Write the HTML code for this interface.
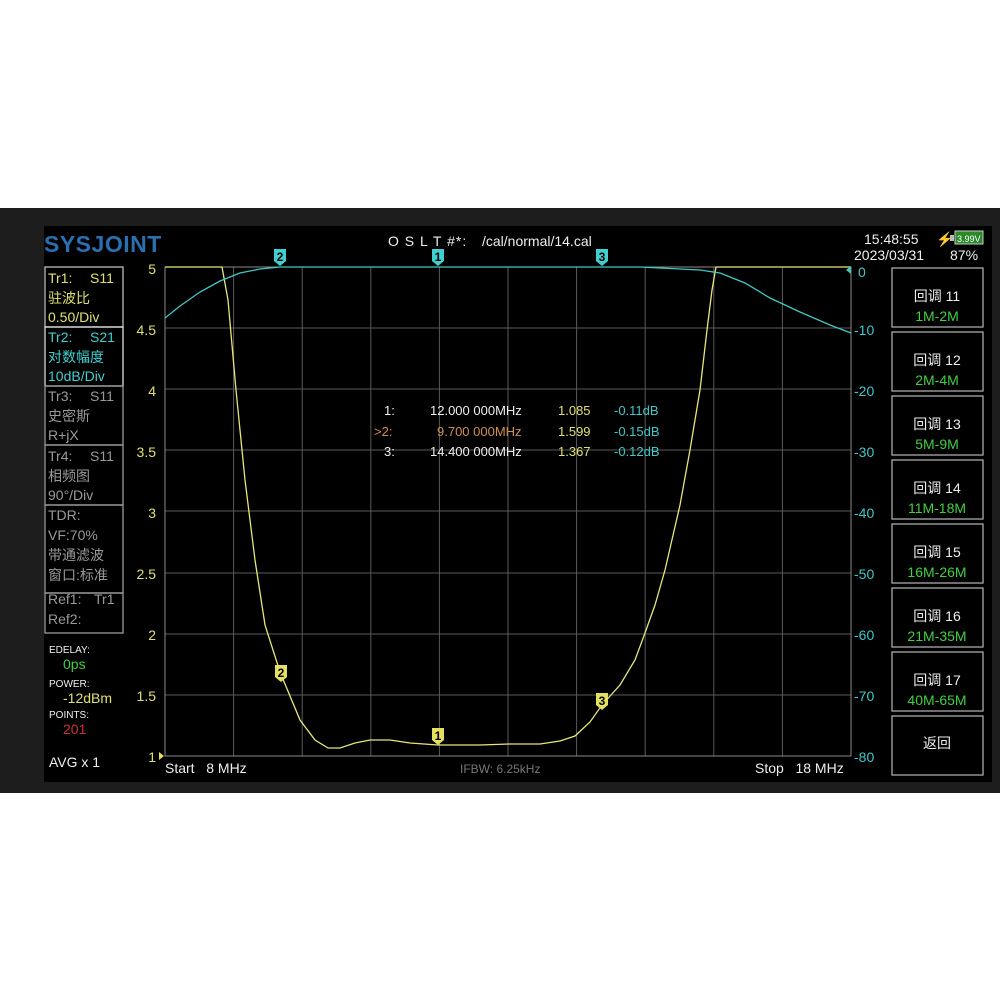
<!DOCTYPE html>
<html><head><meta charset="utf-8"><style>
html,body{margin:0;padding:0;background:#fff;width:1000px;height:1000px;overflow:hidden}
svg{display:block}
text{font-family:"Liberation Sans","Noto Sans CJK SC",sans-serif;white-space:pre}
</style></head><body>
<svg width="1000" height="1000" viewBox="0 0 1000 1000" xml:space="preserve">
<rect x="0" y="0" width="1000" height="1000" fill="#fff"/>
<rect x="0" y="208" width="1000" height="585" fill="#1d1d1d"/>
<rect x="44" y="226" width="948" height="556" fill="#000"/>
<text x="44" y="252" font-size="23" font-weight="bold" fill="#2a6fb0" letter-spacing="0.5">SYSJOINT</text>
<text x="388" y="246" font-size="14" fill="#eee" letter-spacing="1">O S L T #*:</text>
<text x="482" y="246" font-size="14" fill="#eee">/cal/normal/14.cal</text>
<text x="864" y="244" font-size="14" fill="#eee">15:48:55</text>
<text x="936" y="244" font-size="14" fill="#f0c020">⚡</text>
<rect x="950" y="235" width="4" height="6" fill="#bbb"/>
<rect x="955" y="231" width="28" height="13" fill="#2a8a2a" stroke="#ccc"/>
<text x="957" y="242" font-size="9" fill="#fff">3.99V</text>
<text x="854" y="260" font-size="14" fill="#eee">2023/03/31</text>
<text x="950" y="260" font-size="14" fill="#eee">87%</text>
<g stroke="#5a5a5a" stroke-width="1">
<line x1="233.6" y1="267" x2="233.6" y2="756"/><line x1="302.2" y1="267" x2="302.2" y2="756"/><line x1="370.8" y1="267" x2="370.8" y2="756"/><line x1="439.4" y1="267" x2="439.4" y2="756"/><line x1="508" y1="267" x2="508" y2="756"/><line x1="576.6" y1="267" x2="576.6" y2="756"/><line x1="645.2" y1="267" x2="645.2" y2="756"/><line x1="713.8" y1="267" x2="713.8" y2="756"/><line x1="782.4" y1="267" x2="782.4" y2="756"/>
<line x1="165" y1="328" x2="851" y2="328"/><line x1="165" y1="389" x2="851" y2="389"/><line x1="165" y1="450" x2="851" y2="450"/><line x1="165" y1="511" x2="851" y2="511"/><line x1="165" y1="573" x2="851" y2="573"/><line x1="165" y1="634" x2="851" y2="634"/><line x1="165" y1="695" x2="851" y2="695"/>
</g>
<rect x="165" y="267" width="686" height="489" fill="none" stroke="#8a8a8a"/>
<polyline fill="none" stroke="#e6e67a" stroke-width="1.3" points="165,267 222,267 228,300 236,390 245,480 255,560 265,625 280,672 300,720 315,740 328,748 340,748 355,743 370,740 390,740 410,743 438,745 480,745 510,744 540,744 560,741 575,736 590,722 602,705 620,685 635,660 645,633 655,605 665,570 680,505 690,450 700,390 707,330 712,290 716,267 851,267"/>
<polyline fill="none" stroke="#40c8c8" stroke-width="1.3" points="165,318 180,306 200,292 220,281 240,273 260,269 280,267 640,267 680,269 700,270 720,273 745,283 770,298 800,312 830,325 851,333"/>
<g fill="#40d0d0">
<path d="M274,249h12v12l-6,5l-6,-5z"/><path d="M432,249h12v12l-6,5l-6,-5z"/><path d="M596,249h12v12l-6,5l-6,-5z"/>
</g>
<g fill="#e6e060">
<path d="M275,665h12v12l-6,5l-6,-5z"/><path d="M432,728h12v12l-6,5l-6,-5z"/><path d="M596,693h12v12l-6,5l-6,-5z"/>
</g>
<g font-size="12" font-weight="bold" fill="#000" text-anchor="middle">
<text x="280" y="261">2</text><text x="438" y="261">1</text><text x="602" y="261">3</text>
<text x="281" y="677">2</text><text x="438" y="740">1</text><text x="602" y="705">3</text>
</g>
<path d="M851,266l-5,4l5,4z" fill="#40c8c8"/>
<path d="M159,752l5,4l-5,4z" fill="#e6e060"/>
<g font-size="14" fill="#e0e070" text-anchor="end">
<text x="156" y="274">5</text><text x="156" y="335">4.5</text><text x="156" y="396">4</text><text x="156" y="457">3.5</text><text x="156" y="518">3</text><text x="156" y="579">2.5</text><text x="156" y="640">2</text><text x="156" y="701">1.5</text><text x="156" y="762">1</text>
</g>
<g font-size="14" fill="#40c8c8">
<text x="858" y="277">0</text><text x="854" y="335">-10</text><text x="854" y="396">-20</text><text x="854" y="457">-30</text><text x="854" y="518">-40</text><text x="854" y="579">-50</text><text x="854" y="640">-60</text><text x="854" y="701">-70</text><text x="854" y="762">-80</text>
</g>
<text x="165" y="773" font-size="14" fill="#eee">Start   8 MHz</text>
<text x="460" y="773" font-size="12" fill="#777">IFBW: 6.25kHz</text>
<text x="755" y="773" font-size="14" fill="#eee">Stop   18 MHz</text>
<g font-size="13">
<text x="384" y="415" fill="#eee">1:</text><text x="430" y="415" fill="#eee">12.000 000MHz</text><text x="558" y="415" fill="#e0e070">1.085</text><text x="614" y="415" fill="#40c8c8">-0.11dB</text>
<text x="374" y="436" fill="#d09050">&gt;2:</text><text x="437" y="436" fill="#d09050">9.700 000MHz</text><text x="558" y="436" fill="#e0e070">1.599</text><text x="614" y="436" fill="#40c8c8">-0.15dB</text>
<text x="384" y="456" fill="#eee">3:</text><text x="430" y="456" fill="#eee">14.400 000MHz</text><text x="558" y="456" fill="#e0e070">1.367</text><text x="614" y="456" fill="#40c8c8">-0.12dB</text>
</g>
<g fill="none" stroke-width="1.3">
<rect x="45" y="267" width="78" height="60" stroke="#bbb"/>
<rect x="45" y="327" width="78" height="59" stroke="#ddd"/>
<rect x="45" y="386" width="78" height="59" stroke="#999"/>
<rect x="45" y="445" width="78" height="60" stroke="#999"/>
<rect x="45" y="505" width="78" height="88" stroke="#999"/>
<rect x="45" y="593" width="78" height="40" stroke="#999"/>
</g>
<g font-size="14">
<text x="48" y="283" fill="#e0e070">Tr1:</text><text x="90" y="283" fill="#e0e070">S11</text><text x="48" y="303" fill="#e0e070">驻波比</text><text x="48" y="322" fill="#e0e070">0.50/Div</text>
<text x="48" y="342" fill="#40d0d0">Tr2:</text><text x="90" y="342" fill="#40d0d0">S21</text><text x="48" y="362" fill="#40d0d0">对数幅度</text><text x="48" y="381" fill="#40d0d0">10dB/Div</text>
<text x="48" y="401" fill="#999">Tr3:</text><text x="90" y="401" fill="#999">S11</text><text x="48" y="421" fill="#999">史密斯</text><text x="48" y="440" fill="#999">R+jX</text>
<text x="48" y="461" fill="#999">Tr4:</text><text x="90" y="461" fill="#999">S11</text><text x="48" y="481" fill="#999">相频图</text><text x="48" y="500" fill="#999">90°/Div</text>
<text x="48" y="520" fill="#999">TDR:</text><text x="48" y="540" fill="#999">VF:70%</text><text x="48" y="560" fill="#999">带通滤波</text><text x="48" y="580" fill="#999">窗口:标准</text>
<text x="48" y="604" fill="#999">Ref1:</text><text x="94" y="604" fill="#999">Tr1</text><text x="48" y="624" fill="#999">Ref2:</text>
</g>
<g font-size="10" fill="#eee"><text x="49" y="653">EDELAY:</text><text x="49" y="687">POWER:</text><text x="49" y="718">POINTS:</text></g>
<text x="63" y="669" font-size="14" fill="#40d040">0ps</text>
<text x="63" y="703" font-size="14" fill="#e0e070">-12dBm</text>
<text x="63" y="734" font-size="14" fill="#d03030">201</text>
<text x="49" y="767" font-size="14" fill="#eee">AVG x 1</text>
<g fill="none" stroke="#aaa" stroke-width="1.3">
<rect x="892" y="268" width="91" height="59"/><rect x="892" y="332" width="91" height="59"/><rect x="892" y="396" width="91" height="59"/><rect x="892" y="460" width="91" height="59"/><rect x="892" y="524" width="91" height="59"/><rect x="892" y="588" width="91" height="59"/><rect x="892" y="652" width="91" height="59"/><rect x="892" y="716" width="91" height="59"/>
</g>
<g font-size="14" text-anchor="middle">
<text x="937" y="301" fill="#eee">回调 11</text><text x="937" y="321" fill="#40d040">1M-2M</text>
<text x="937" y="365" fill="#eee">回调 12</text><text x="937" y="385" fill="#40d040">2M-4M</text>
<text x="937" y="429" fill="#eee">回调 13</text><text x="937" y="449" fill="#40d040">5M-9M</text>
<text x="937" y="493" fill="#eee">回调 14</text><text x="937" y="513" fill="#40d040">11M-18M</text>
<text x="937" y="557" fill="#eee">回调 15</text><text x="937" y="577" fill="#40d040">16M-26M</text>
<text x="937" y="621" fill="#eee">回调 16</text><text x="937" y="641" fill="#40d040">21M-35M</text>
<text x="937" y="685" fill="#eee">回调 17</text><text x="937" y="705" fill="#40d040">40M-65M</text>
<text x="937" y="748" fill="#eee">返回</text>
</g>
</svg>
</body></html>
